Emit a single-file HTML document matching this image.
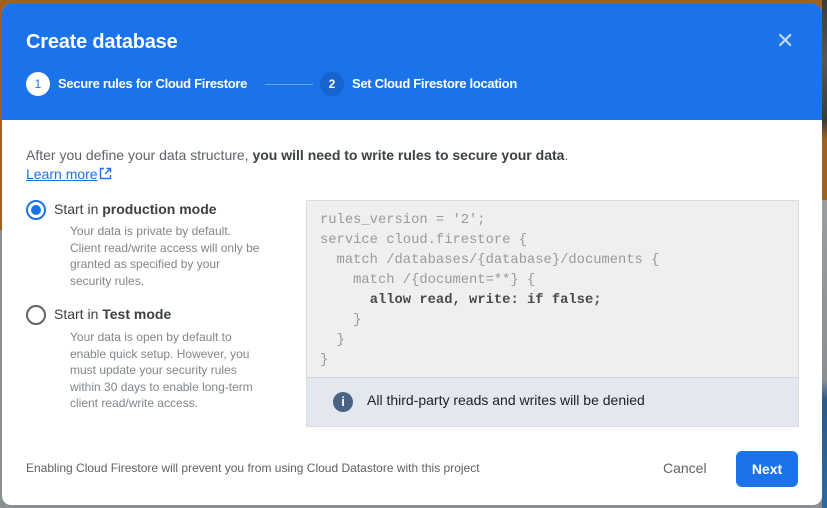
<!DOCTYPE html>
<html><head><style>
*{margin:0;padding:0;box-sizing:border-box}
body{width:827px;height:508px;overflow:hidden;position:relative;font-family:"Liberation Sans",sans-serif;background:linear-gradient(#a0601e 0,#a0601e 230px,#8a8f94 230px,#8a8f94 508px)}
.rbg{position:absolute;left:822px;top:0;width:5px;height:508px;background:linear-gradient(#3a3a3a 0,#555 60px,#3a3a3a 120px,#a0601e 140px,#a0601e 200px,#9a9ea2 200px,#8a8f94 380px,#2a5a8a 400px,#2a6aa0 508px)}
.m{position:absolute;left:2px;top:4px;width:820px;height:501px;background:#fff;border-radius:9px;overflow:hidden}
.h{height:116px;background:#1a73e8;color:#fff;position:relative}
.t{position:absolute;left:24px;top:27px;font-size:20px;font-weight:bold;letter-spacing:-0.2px}
.x{position:absolute;left:774px;top:24px;font-size:22px;color:#c6d8f8}
.c{position:absolute;top:68px;width:24px;height:24px;border-radius:50%;font-size:12px;text-align:center;line-height:24px}
.s{position:absolute;top:72px;font-size:13px;font-weight:bold;letter-spacing:-0.3px}
.p{position:absolute;font-size:14px;color:#5f6368}
.d{position:absolute;left:68px;font-size:12px;color:#80868b;line-height:16.5px;width:192px}
.r{position:absolute;width:20px;height:20px;border-radius:50%}
.code{position:absolute;left:304px;top:196px;width:493px;height:227px;background:#efefef;border:1px solid #dadce0}
pre{font-family:"Liberation Mono",monospace;font-size:13.8px;line-height:20px;color:#9a9a9a;position:absolute;left:13px;top:10px}
pre b{color:#4a4a4a}
.info{position:absolute;left:0;right:0;bottom:0;height:49px;background:#e3e8f0;border-top:1px solid #d0d4da}
</style></head><body>
<div class="rbg"></div>
<div class="m">
<div class="h">
<div class="t">Create database</div>
<div class="x">✕</div>
<div class="c" style="left:24px;background:#fff;color:#1a73e8">1</div>
<div class="s" style="left:56px">Secure rules for Cloud Firestore</div>
<div style="position:absolute;left:263px;top:80px;width:48px;height:1px;background:#6fa3f0"></div>
<div class="c" style="left:318px;background:#1764cc;color:#fff;font-weight:bold">2</div>
<div class="s" style="left:350px">Set Cloud Firestore location</div>
</div>
<div class="p" style="left:24px;top:143px">After you define your data structure, <b style="color:#3c4043">you will need to write rules to secure your data</b>.</div>
<div class="p" style="left:24px;top:162px;color:#1a73e8;text-decoration:underline">Learn more</div>
<svg style="position:absolute;left:97px;top:163px" width="13" height="13" viewBox="0 0 13 13"><path d="M5 1.5H1.5v10h10V8M7.5 1.5h4v4M11.5 1.5L6 7" fill="none" stroke="#1a73e8" stroke-width="1.4"/></svg>
<div class="r" style="left:24px;top:196px;border:2px solid #1a73e8"><div style="position:absolute;left:3px;top:3px;width:10px;height:10px;border-radius:50%;background:#1a73e8"></div></div>
<div class="p" style="left:52px;top:197px;color:#3c4043">Start in <b>production mode</b></div>
<div class="d" style="top:219px">Your data is private by default. Client read/write access will only be granted as specified by your security rules.</div>
<div class="r" style="left:24px;top:301px;border:2px solid #5f6368"></div>
<div class="p" style="left:52px;top:302px;color:#3c4043">Start in <b>Test mode</b></div>
<div class="d" style="top:325px;width:190px">Your data is open by default to enable quick setup. However, you must update your security rules within 30 days to enable long-term client read/write access.</div>
<div class="code"><pre>rules_version = '2';
service cloud.firestore {
  match /databases/{database}/documents {
    match /{document=**} {
      <b>allow read, write: if false;</b>
    }
  }
}</pre>
<div class="info"><div style="position:absolute;left:26px;top:14px;width:20px;height:20px;border-radius:50%;background:#4a6284;color:#fff;font-weight:bold;font-size:13px;text-align:center;line-height:20px">i</div>
<div style="position:absolute;left:60px;top:14px;font-size:14px;color:#202124">All third-party reads and writes will be denied</div></div>
</div>
<div style="position:absolute;left:24px;top:457px;font-size:12px;color:#5f6368">Enabling Cloud Firestore will prevent you from using Cloud Datastore with this project</div>
<div style="position:absolute;left:661px;top:456px;font-size:14px;color:#5f6368">Cancel</div>
<div style="position:absolute;left:734px;top:447px;width:62px;height:36px;border-radius:6px;background:#1a73e8;color:#fff;font-weight:bold;font-size:14px;text-align:center;line-height:36px">Next</div>
</div>
</body></html>
